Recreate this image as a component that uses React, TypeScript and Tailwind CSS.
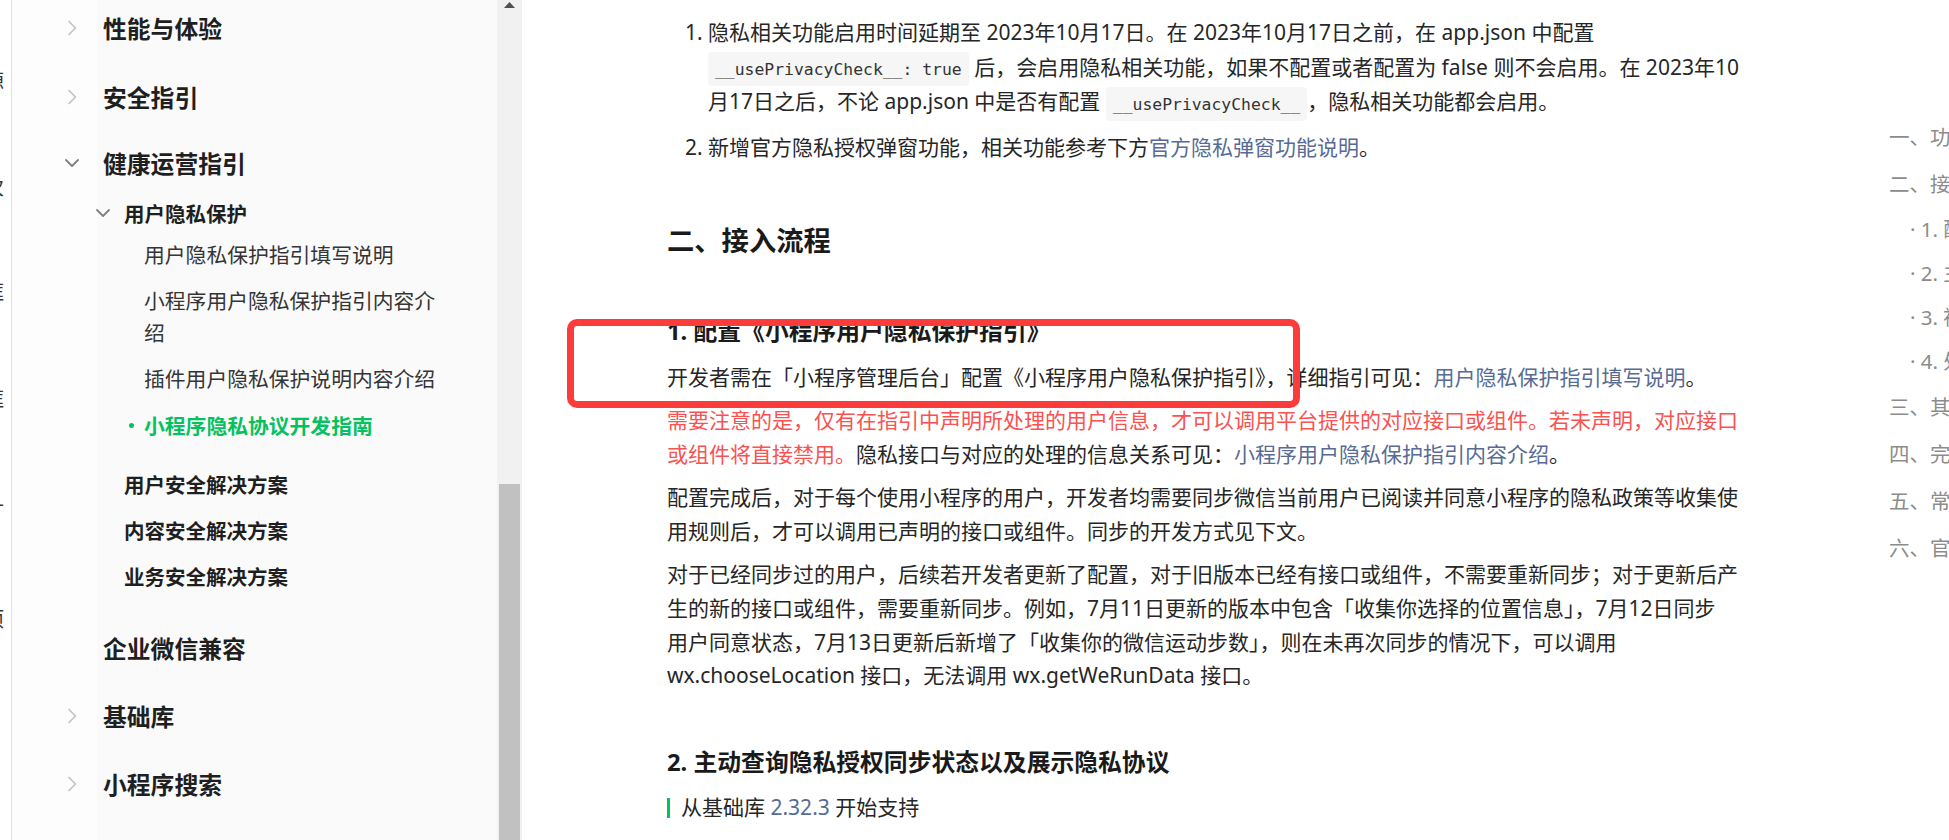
import React from "react";

const ChevRight = () => (
  <svg width="16" height="16" viewBox="0 0 16 16" className="shrink-0">
    <polyline points="5,1.5 11.5,8 5,14.5" fill="none" stroke="#c2c2c2" strokeWidth="1.7" strokeLinecap="round" strokeLinejoin="round" />
  </svg>
);

const ChevDown = () => (
  <svg width="16" height="16" viewBox="0 0 16 16" className="shrink-0">
    <polyline points="2,5 8,11 14,5" fill="none" stroke="#808080" strokeWidth="1.8" strokeLinecap="round" strokeLinejoin="round" />
  </svg>
);

const Code = ({ children }: { children: React.ReactNode }) => (
  <code className="font-['DejaVu_Sans_Mono',monospace] text-[16.4px] leading-[18px] text-[#333] bg-[#f6f6f6] rounded-[4px] px-[7px] py-[7.5px]">
    {children}
  </code>
);

const Link = ({ children }: { children: React.ReactNode }) => (
  <span className="text-[#576b95]">{children}</span>
);

function LeftStrip() {
  return (
    <div className="w-[11px] shrink-0 overflow-hidden bg-white text-[20px] text-[#333] font-['Noto_Sans_CJK_SC',sans-serif] pt-[67px] flex flex-col">
      <div className="h-[28px] flex items-center justify-end pr-[7px]">源</div>
      <div className="h-[28px] mt-[78px] flex items-center justify-end pr-[7px]">次</div>
      <div className="h-[28px] mt-[77px] flex items-center justify-end pr-[7px]">框</div>
      <div className="h-[28px] mt-[79px] flex items-center justify-end pr-[7px]">框</div>
      <div className="h-[28px] mt-[79px] flex items-center justify-end pr-[7px]">十</div>
      <div className="h-[28px] mt-[85px] flex items-center justify-end pr-[7px]">项</div>
    </div>
  );
}

function Sidebar() {
  return (
    <div className="w-[485px] shrink-0 bg-[linear-gradient(90deg,#fdfdfd_85px,#fafafa_85px)] font-['Noto_Sans_CJK_SC',sans-serif] overflow-hidden">
      <div className="mt-[-7px] flex flex-col whitespace-nowrap">
        <div className="h-[70px] flex items-center pl-[52px]">
          <ChevRight />
          <span className="ml-[23px] text-[23.8px] font-bold text-[#1f1f1f]">性能与体验</span>
        </div>
        <div className="h-[68px] flex items-center pl-[52px]">
          <ChevRight />
          <span className="ml-[23px] text-[23.8px] font-bold text-[#1f1f1f]">安全指引</span>
        </div>
        <div className="h-[64px] flex items-center pl-[52px]">
          <ChevDown />
          <span className="ml-[23px] text-[23.8px] font-bold text-[#1f1f1f]">健康运营指引</span>
        </div>
        <div className="h-[36px] flex items-center pl-[83px]">
          <ChevDown />
          <span className="ml-[13px] text-[20.5px] font-bold text-[#1f1f1f]">用户隐私保护</span>
        </div>
        <div className="py-[7px] pl-[132px] text-[20.8px] leading-[32px] text-[#353535]">用户隐私保护指引填写说明</div>
        <div className="py-[7px] pl-[132px] text-[20.8px] leading-[32px] text-[#353535]">
          小程序用户隐私保护指引内容介
          <br />
          绍
        </div>
        <div className="py-[7px] pl-[132px] text-[20.8px] leading-[32px] text-[#353535]">插件用户隐私保护说明内容介绍</div>
        <div className="mt-[1px] py-[7px] pl-[117px] flex items-center text-[20.8px] leading-[32px] text-[#07c160] font-bold">
          <span className="w-[5px] h-[5px] rounded-full bg-[#07c160] shrink-0" />
          <span className="ml-[10px]">小程序隐私协议开发指南</span>
        </div>
        <div className="mt-[13px] h-[46px] flex items-center pl-[112px] text-[20.5px] font-bold text-[#1f1f1f]">用户安全解决方案</div>
        <div className="h-[46px] flex items-center pl-[112px] text-[20.5px] font-bold text-[#1f1f1f]">内容安全解决方案</div>
        <div className="h-[46px] flex items-center pl-[112px] text-[20.5px] font-bold text-[#1f1f1f]">业务安全解决方案</div>
        <div className="mt-[15px] h-[68px] flex items-center pl-[91px]">
          <span className="text-[23.8px] font-bold text-[#1f1f1f]">企业微信兼容</span>
        </div>
        <div className="h-[68px] flex items-center pl-[52px]">
          <ChevRight />
          <span className="ml-[23px] text-[23.8px] font-bold text-[#1f1f1f]">基础库</span>
        </div>
        <div className="h-[68px] flex items-center pl-[52px]">
          <ChevRight />
          <span className="ml-[23px] text-[23.8px] font-bold text-[#1f1f1f]">小程序搜索</span>
        </div>
      </div>
    </div>
  );
}

function Scrollbar() {
  return (
    <div className="w-[25px] shrink-0 bg-[#f1f1f1] flex flex-col">
      <div className="h-[17px] flex justify-center pt-[2px]">
        <svg width="11" height="6" viewBox="0 0 11 6">
          <polygon points="5.5,0 11,6 0,6" fill="#505050" />
        </svg>
      </div>
      <div className="h-[467px]" />
      <div className="flex-1 mx-[2px] bg-[#c1c1c1]" />
    </div>
  );
}

function Content() {
  return (
    <div className="ml-[145px] w-[1080px] shrink-0 pt-[15px] text-[21px] leading-[33.6px] text-[#262626] whitespace-nowrap font-['Noto_Sans','Noto_Sans_CJK_SC',sans-serif]">
      <ol className="list-decimal pl-[41px] leading-[34.5px]">
        <li>
          隐私相关功能启用时间延期至 2023年10月17日。在 2023年10月17日之前，在 app.json 中配置
          <br />
          <Code>__usePrivacyCheck__: true</Code> 后，会启用隐私相关功能，如果不配置或者配置为 false 则不会启用。在 2023年10
          <br />
          月17日之后，不论 app.json 中是否有配置 <Code>__usePrivacyCheck__</Code>，隐私相关功能都会启用。
        </li>
        <li className="mt-[11.5px]">
          新增官方隐私授权弹窗功能，相关功能参考下方<Link>官方隐私弹窗功能说明</Link>。
        </li>
      </ol>
      <h2 className="mt-[57px] text-[27.3px] leading-[38px] font-bold text-[#1a1a1a]">二、接入流程</h2>
      <h3 className="mt-[54px] text-[23.8px] leading-[34px] font-bold text-[#1a1a1a]">1. 配置《小程序用户隐私保护指引》</h3>
      <p className="mt-[13px]">
        开发者需在「小程序管理后台」配置《小程序用户隐私保护指引》，详细指引可见：<Link>用户隐私保护指引填写说明</Link>。
      </p>
      <p className="mt-[10px]">
        <span className="text-[#fa5151]">
          需要注意的是，仅有在指引中声明所处理的用户信息，才可以调用平台提供的对应接口或组件。若未声明，对应接口
          <br />
          或组件将直接禁用。
        </span>
        隐私接口与对应的处理的信息关系可见：<Link>小程序用户隐私保护指引内容介绍</Link>。
      </p>
      <p className="mt-[10px]">
        配置完成后，对于每个使用小程序的用户，开发者均需要同步微信当前用户已阅读并同意小程序的隐私政策等收集使
        <br />
        用规则后，才可以调用已声明的接口或组件。同步的开发方式见下文。
      </p>
      <p className="mt-[10px]">
        对于已经同步过的用户，后续若开发者更新了配置，对于旧版本已经有接口或组件，不需要重新同步；对于更新后产
        <br />
        生的新的接口或组件，需要重新同步。例如，7月11日更新的版本中包含「收集你选择的位置信息」，7月12日同步
        <br />
        用户同意状态，7月13日更新后新增了「收集你的微信运动步数」，则在未再次同步的情况下，可以调用
        <br />
        wx.chooseLocation 接口，无法调用 wx.getWeRunData 接口。
      </p>
      <h3 className="mt-[52px] text-[23.8px] leading-[34px] font-bold text-[#1a1a1a]">2. 主动查询隐私授权同步状态以及展示隐私协议</h3>
      <div className="mt-[12px] h-[33.6px] flex items-center">
        <span className="w-[3px] h-[20px] bg-[#07c160] shrink-0" />
        <span className="ml-[11px]">
          从基础库 <Link>2.32.3</Link> 开始支持
        </span>
      </div>
    </div>
  );
}

function Toc() {
  return (
    <div className="ml-[142px] pt-[113.5px] flex flex-col whitespace-nowrap text-[20.5px] text-[#8c8c8c] font-['Noto_Sans','Noto_Sans_CJK_SC',sans-serif]">
      <div className="h-[47px] flex items-center">一、功能介绍</div>
      <div className="h-[47px] flex items-center">二、接入流程</div>
      <div className="h-[44px] flex items-center pl-[21px]">· 1. 配置《小程序用户隐私保护指引》</div>
      <div className="h-[44px] flex items-center pl-[21px]">· 2. 主动查询隐私授权同步状态以及展示隐私协议</div>
      <div className="h-[44px] flex items-center pl-[21px]">· 3. 被动查询隐私授权同步状态</div>
      <div className="h-[44px] flex items-center pl-[21px]">· 4. 处理隐私授权</div>
      <div className="h-[47px] flex items-center">三、其他说明</div>
      <div className="h-[47px] flex items-center">四、完整示例</div>
      <div className="h-[47px] flex items-center">五、常见问题</div>
      <div className="h-[47px] flex items-center">六、官方隐私弹窗功能说明</div>
    </div>
  );
}

export default function App() {
  return (
    <div className="w-[1949px] h-[840px] overflow-hidden flex bg-white">
      <LeftStrip />
      <div className="w-[1px] shrink-0 bg-[#e2e2e2]" />
      <Sidebar />
      <Scrollbar />
      <div className="flex-1 relative flex overflow-hidden bg-white">
        <Content />
        <Toc />
        <div className="absolute left-[45px] top-[319px] w-[733px] h-[89px] border-[7px] border-[#fc3b3b] rounded-[10px] pointer-events-none" />
      </div>
    </div>
  );
}
